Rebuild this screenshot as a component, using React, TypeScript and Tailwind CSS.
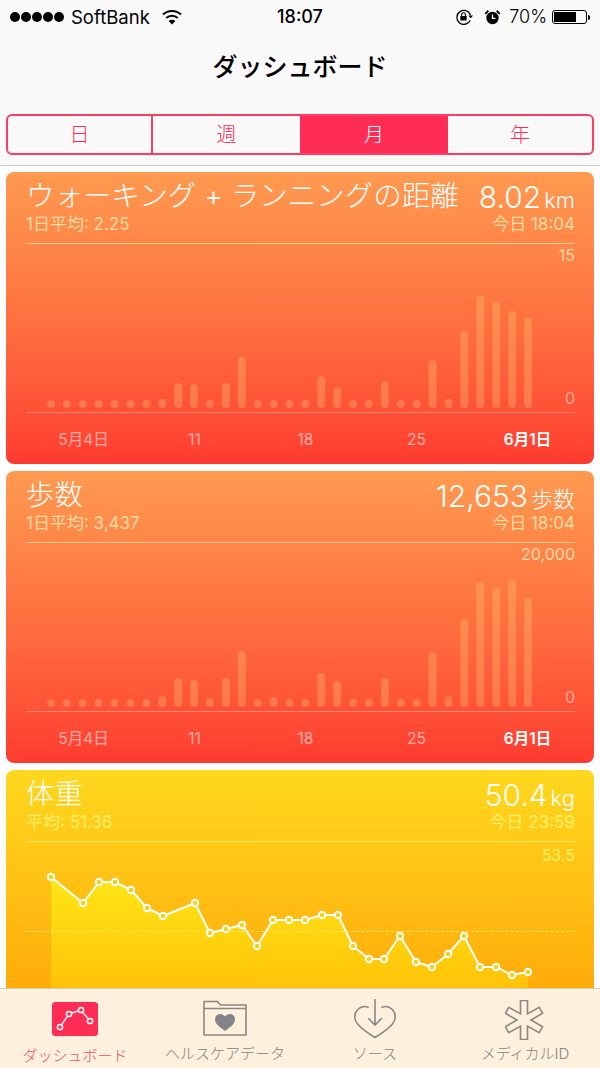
const barsDistance = [8, 8, 8, 8, 8, 8, 8, 9, 25, 24, 8, 25, 51, 8, 8, 8, 8, 32, 21, 8, 8, 27, 8, 8, 48, 9, 77, 113, 107, 97, 91];
const barsSteps = [8, 8, 8, 8, 8, 8, 8, 11, 29, 27, 9, 29, 56, 8, 10, 8, 8, 34, 26, 8, 8, 29, 8, 8, 55, 11, 88, 125, 119, 127, 109];

const weight: [number, number][] = [
	[51, 877], [83, 903], [99, 882], [115, 882], [131, 890], [147, 908], [163, 916], [195, 903],
	[210, 933], [226, 929], [242, 925], [257, 946], [273, 920], [289, 920], [305, 920], [322, 915],
	[338, 915], [353, 946], [369, 959], [384, 959], [400, 936], [416, 962], [432, 967], [448, 954],
	[464, 936], [480, 967], [496, 967], [512, 975], [528, 972],
];

const fontStack = "font-['Inter','Noto_Sans_CJK_JP',sans-serif]";

const dayLabels = [
	{ text: "5月4日", strong: false },
	{ text: "11", strong: false },
	{ text: "18", strong: false },
	{ text: "25", strong: false },
	{ text: "6月1日", strong: true },
];

function asteriskPoints(cx: number, cy: number, len: number, half: number) {
	const pts: string[] = [];
	for (let i = 0; i < 6; i++) {
		const a = ((i * 60 - 90) * Math.PI) / 180;
		const dx = Math.cos(a);
		const dy = Math.sin(a);
		pts.push(`${cx + len * dx + half * dy},${cy + len * dy - half * dx}`);
		pts.push(`${cx + len * dx - half * dy},${cy + len * dy + half * dx}`);
		const b = a + Math.PI / 6;
		pts.push(`${cx + half * 2 * Math.cos(b)},${cy + half * 2 * Math.sin(b)}`);
	}
	return pts.join(" ");
}

function StatusBar() {
	return (
		<div className="grid h-[34px] grid-cols-[1fr_auto_1fr] items-center px-[10px] text-[18px] leading-none text-black">
			<div className="flex items-center">
				<div className="flex gap-[1px]">
					{[0, 1, 2, 3, 4].map((i) => (
						<span key={i} className="h-[10px] w-[10px] rounded-full bg-black" />
					))}
				</div>
				<span className="ml-[7px] text-[18.5px] font-normal">SoftBank</span>
				<svg className="ml-[12px]" width="20" height="16" viewBox="0 0 20 16" fill="none" stroke="#000">
					<path d="M1 5.5C6 .8 14 .8 19 5.5" strokeWidth="2" />
					<path d="M4.2 9C7.5 6 12.5 6 15.8 9" strokeWidth="2" />
					<path d="M10 15.5 6.6 12c2-1.7 4.8-1.7 6.8 0Z" fill="#000" stroke="none" />
				</svg>
			</div>
			<span className="font-medium">18:07</span>
			<div className="flex items-center justify-end">
				<svg width="19" height="16" viewBox="0 0 19 16" fill="none" stroke="#000">
					<path d="M15.2 11.5A7 7 0 1 1 15.5 6" strokeWidth="1.3" />
					<path d="M13.4 6.4h4.6l-2.3 2.8Z" fill="#000" stroke="none" />
					<rect x="5.3" y="7" width="6.4" height="4.6" rx=".6" fill="#000" stroke="none" />
					<path d="M6.6 7V5.6a1.9 1.9 0 0 1 3.8 0V7" strokeWidth="1.1" />
				</svg>
				<svg className="ml-[10px]" width="17" height="16" viewBox="0 0 17 16">
					<circle cx="8.5" cy="9" r="6.2" fill="#000" />
					<path d="M8.5 5.5V9.3H11.500" fill="none" stroke="#fff" strokeWidth="1.3" />
					<path d="M.6 4.2 3.6 1.1 5 2.4 1.8 5.6ZM16.4 4.2 13.4 1.1 12 2.4 15.2 5.6Z" fill="#000" />
				</svg>
				<span className="ml-[8px] font-light">70%</span>
				<div className="ml-[5px] flex items-center">
					<div className="h-[14px] w-[35px] rounded-[3px] border border-black p-[1px]">
						<div className="h-full w-[22px] bg-black" />
					</div>
					<div className="ml-[1px] h-[5px] w-[2px] rounded-r-full bg-black" />
				</div>
			</div>
		</div>
	);
}

function Segments() {
	const items = ["日", "週", "月", "年"];
	return (
		<div className="mx-[6px] grid h-[41px] grid-cols-[145px_147px_148px_144px] overflow-hidden rounded-[6px] border-2 border-[#ff3d63]">
			{items.map((label, i) => (
				<div
					key={label}
					className={`flex items-center justify-center text-[20px] font-light ${
						label === "月" ? "bg-[#ff2d55] text-white" : "text-[#ff2d55]"
					} ${i === 0 ? "border-r-2 border-[#ff3d63]" : ""}`}
				>
					{label}
				</div>
			))}
		</div>
	);
}

type HeadProps = {
	title: string;
	value: string;
	unit: string;
	sub: string;
	time: string;
	subColor: string;
};

function CardHead({ title, value, unit, sub, time, subColor }: HeadProps) {
	return (
		<div className="flex h-[71px] flex-col pl-[20px] pr-[19px] pt-[7px] text-white">
			<div className="flex h-[35px] items-center justify-between font-light">
				<span className="text-[28.5px] leading-none">{title}</span>
				<span className="flex items-baseline leading-none">
					<span className="text-[30px]">{value}</span>
					<span className="ml-[3px] text-[22px]">{unit}</span>
				</span>
			</div>
			<div className={`flex h-[20px] items-center justify-between text-[17px] font-normal leading-none ${subColor}`}>
				<span>{sub}</span>
				<span>{time}</span>
			</div>
		</div>
	);
}

function BarCard({ head, bars, max }: { head: Omit<HeadProps, "subColor">; bars: number[]; max: string }) {
	return (
		<div className="h-[292px] shrink-0 overflow-hidden rounded-[8px] bg-linear-to-b from-[#ff9a50] to-[#ff3a30]">
			<CardHead {...head} subColor="text-[#ffdca0]" />
			<div className="relative ml-[20px] mr-[19px] h-[170px] border-y border-t-[#ffc98a] border-b-white/30">
				<svg className="absolute -left-[20px] -top-[1px]" width="588" height="169">
					{bars.map((h, i) => (
						<rect
							key={i}
							x={41 + i * 15.9}
							y={165 - h}
							width="8"
							height={h}
							rx="4"
							fill="#ffc070"
							fillOpacity="0.35"
						/>
					))}
				</svg>
				<span className="absolute right-0 top-[3px] text-[16px] leading-none text-[#ffd9a6]">{max}</span>
				<span className="absolute bottom-[6px] right-0 text-[16px] leading-none text-white/50">0</span>
			</div>
			<div className="grid h-[51px] grid-cols-[repeat(5,111px)] items-center pl-[22px] pt-[2px] text-center text-[15.5px] leading-none">
				{dayLabels.map((d) => (
					<span key={d.text} className={d.strong ? "font-semibold text-white" : "font-normal text-white/55"}>
						{d.text}
					</span>
				))}
			</div>
		</div>
	);
}

function WeightCard() {
	const line = weight.map(([x, y]) => `${x - 6},${y - 841}`).join(" ");
	const area = `45,160 ${line} 522,160`;
	return (
		<div className="h-[292px] shrink-0 rounded-t-[8px] bg-linear-to-b from-[#ffd81e] to-[#ff9c00]">
			<CardHead title="体重" value="50.4" unit="kg" sub="平均: 51.36" time="今日 23:59" subColor="text-[#fff06a]" />
			<div className="relative ml-[20px] mr-[19px] h-[148px] border-t border-[#ffe95c]">
				<svg className="absolute -left-[20px] -top-[1px]" width="588" height="160">
					<defs>
						<linearGradient id="weightFill" x1="0" y1="30" x2="0" y2="150" gradientUnits="userSpaceOnUse">
							<stop offset="0" stopColor="#ffe817" />
							<stop offset="1" stopColor="#ffc208" />
						</linearGradient>
					</defs>
					<polygon points={area} fill="url(#weightFill)" />
					<line x1="20" y1="90.5" x2="569" y2="90.5" stroke="#ffe95c" strokeDasharray="3 2" />
					<polyline points={line} fill="none" stroke="#fff" strokeWidth="2" strokeLinejoin="round" />
					{weight.map(([x, y]) => (
						<circle key={x} cx={x - 6} cy={y - 841} r="3.2" fill="#ffce10" stroke="#fff" strokeWidth="2" />
					))}
				</svg>
				<span className="absolute right-0 top-[5px] text-[16px] leading-none text-[#fff06a]">53.5</span>
			</div>
		</div>
	);
}

function TabBar() {
	const grey = "#8a8784";
	return (
		<div className="grid h-[80px] shrink-0 grid-cols-4 border-t border-[#d9cfbc] bg-[#fdf0dc] text-[15px] font-light leading-none text-[#85838a]">
			<div className="flex flex-col items-center">
				<svg className="mt-[13px]" width="46" height="34" viewBox="0 0 46 34">
					<rect width="46" height="34" rx="3.5" fill="#ff2d55" />
					<polyline points="8,25 17,12 29,8 38,19" fill="none" stroke="#fff" strokeWidth="1.5" opacity=".9" />
					{[[8, 25], [17, 12], [29, 8], [38, 19]].map(([x, y]) => (
						<circle key={x} cx={x} cy={y} r="2.6" fill="#ff2d55" stroke="#fff" strokeWidth="1.5" />
					))}
				</svg>
				<span className="mt-[12px] text-[#e8506f]">ダッシュボード</span>
			</div>
			<div className="flex flex-col items-center">
				<svg className="mt-[11px]" width="46" height="36" viewBox="0 0 46 36" fill="none" stroke={grey} strokeWidth="1.6">
					<path d="M2 35V1.500H15.500L18.500 5H44V35Z" strokeLinejoin="round" />
					<path d="M2 8.500H44" />
					<path d="M23 31C19 27.6 13 24.6 13 19.4 13 16 15.6 14 18 14c2 0 3.8 1 5 2.6C24.200 15 26 14 28 14c2.400 0 5 2 5 5.400C33 24.600 27 27.600 23 31Z" fill="#85848a" stroke="none" />
				</svg>
				<span className="mt-[10px]">ヘルスケアデータ</span>
			</div>
			<div className="flex flex-col items-center">
				<svg className="mt-[10px]" width="44" height="40" viewBox="0 0 44 40" fill="none" stroke={grey} strokeWidth="1.6" strokeLinecap="round">
					<path d="M15 8.200C12 7 8 7.300 4.700 10.500 .5 15 1 21 5 25.500 9.500 30.500 17 35.500 22 38.500 27 35.500 34.500 30.500 39 25.500 43 21 43.500 15 39.300 10.500 36 7.300 32 7 29 8.200" />
					<path d="M22 .5V26M15.500 19.500 22 26 28.500 19.500" />
				</svg>
				<span className="mt-[7px]">ソース</span>
			</div>
			<div className="flex flex-col items-center">
				<svg className="mt-[11px]" width="40" height="40" viewBox="0 0 40 40">
					<polygon points={asteriskPoints(19, 20, 19.5, 3.5)} fill="none" stroke={grey} strokeWidth="1.6" />
				</svg>
				<span className="mt-[6px]">メディカルID</span>
			</div>
		</div>
	);
}

export default function App() {
	return (
		<div className={`flex h-[1068px] w-[600px] flex-col overflow-hidden bg-white ${fontStack}`}>
			<header className="h-[166px] shrink-0 border-b border-[#c8c7cc] bg-[#f9f9f9]">
				<StatusBar />
				<h1 className="flex h-[66px] items-center justify-center text-[25px] font-medium leading-none text-black">
					ダッシュボード
				</h1>
				<div className="pt-[14px]">
					<Segments />
				</div>
			</header>
			<main className="flex min-h-0 flex-1 flex-col gap-[7px] overflow-hidden px-[6px] pt-[6px]">
				<BarCard
					bars={barsDistance}
					max="15"
					head={{ title: "ウォーキング + ランニングの距離", value: "8.02", unit: "km", sub: "1日平均: 2.25", time: "今日 18:04" }}
				/>
				<BarCard
					bars={barsSteps}
					max="20,000"
					head={{ title: "歩数", value: "12,653", unit: "歩数", sub: "1日平均: 3,437", time: "今日 18:04" }}
				/>
				<WeightCard />
			</main>
			<TabBar />
		</div>
	);
}
